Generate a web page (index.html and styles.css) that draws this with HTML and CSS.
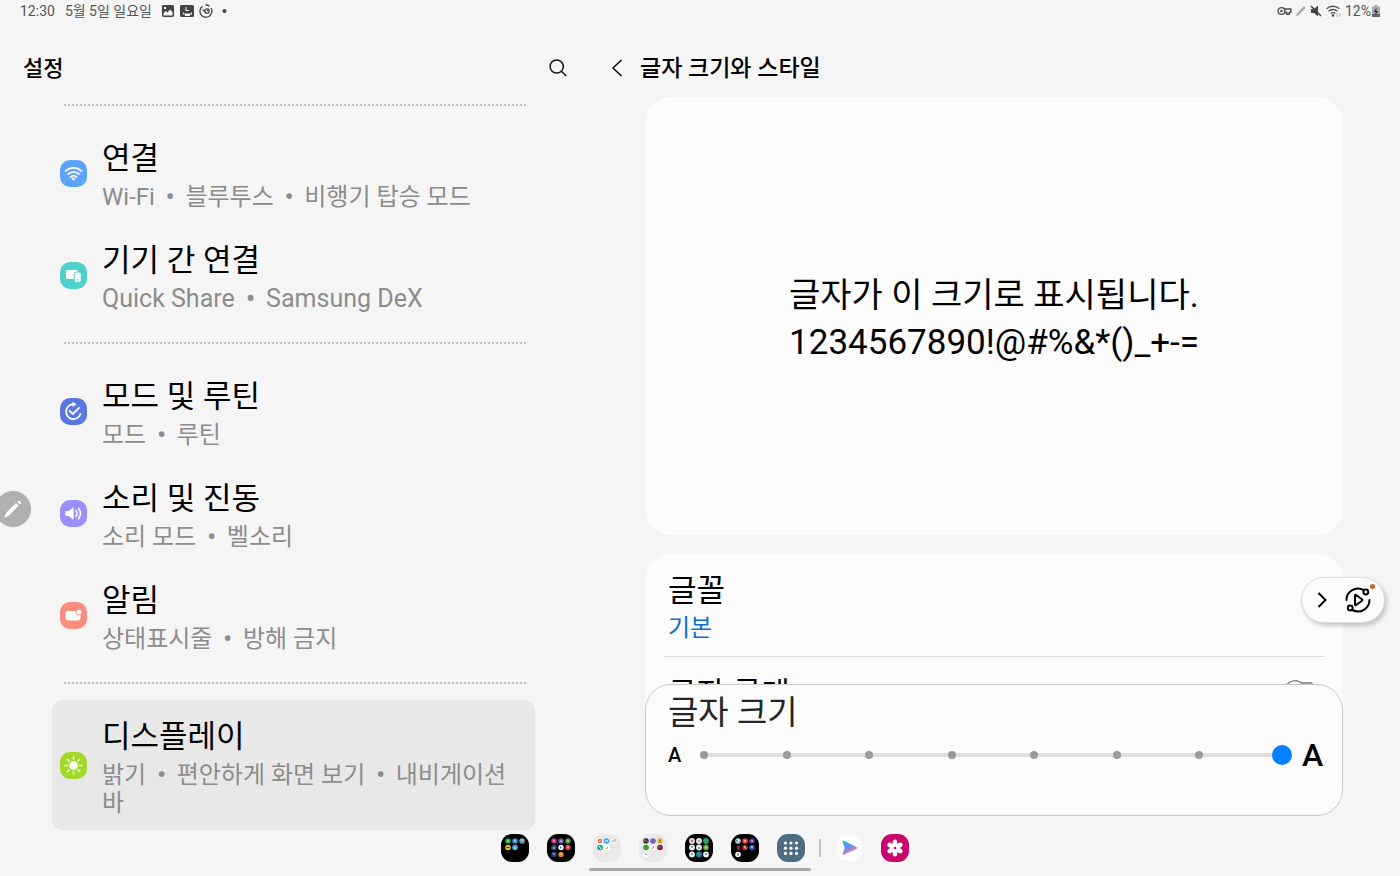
FILE: index.html
```html
<!DOCTYPE html>
<html lang="ko">
<head>
<meta charset="utf-8">
<meta name="viewport" content="width=device-width, initial-scale=1">
<title>설정</title>
<link rel="stylesheet" href="styles.css">
</head>
<body>
<div class="screen">
  <div class="status">
    <time>12:30</time>
    <span class="status-date">5월 5일 일요일</span>
    <svg class="status-notes" width="68" height="14" viewBox="0 0 68 14" aria-hidden="true">
      <path fill="#444" fill-rule="evenodd" d="M2.500 1h9A1.500 1.500 0 0 1 13 2.500v9a1.500 1.500 0 0 1-1.500 1.500h-9A1.500 1.500 0 0 1 1 11.500v-9A1.500 1.500 0 0 1 2.500 1zM2.500 9.500v2h9V8L9 5.500 6.500 8.500 4.500 7zM3 3v2h2V3z"/>
      <path fill="#444" fill-rule="evenodd" d="M20.500 1h11A1.500 1.500 0 0 1 33 2.500v9a1.500 1.500 0 0 1-1.500 1.500h-11a1.500 1.500 0 0 1-1.500-1.500v-9A1.500 1.500 0 0 1 20.500 1zM24.500 3v4h4l-1-1h-2V3zM22 8.500v2h2v1.500h5v-1.500h2v-2h-1v1H23v-1z"/>
      <g fill="none" stroke="#444" stroke-width="1.300"><path d="M41.500 2.300A6 6 0 1 0 50 4M44.500 1A6 6 0 0 1 48.500 2.300"/><circle cx="46" cy="7" r="2.200"/><path d="M41.500 5.500l2 2M46 7l1-1"/></g>
      <circle cx="63.500" cy="7" r="2" fill="#444"/>
    </svg>
    <svg class="status-system" width="66" height="14" viewBox="0 0 66 14" aria-hidden="true">
      <g fill="none" stroke="#4d4d4d" stroke-width="1.400"><circle cx="4.500" cy="7" r="3.400"/><path d="M7.500 5h6.300v3.500h-1.600v1.700H9.800V8.500H7.500"/></g>
      <circle cx="4.500" cy="7" r="1.300" fill="#4d4d4d"/>
      <path d="M19 12.500l1-3 7-7.500 1.800 1.800-7.200 7.200z" fill="#aaa"/>
      <path d="M34 5h3l4-3.500v11L37 9h-3z" fill="#444"/><path d="M34 2l10 10" stroke="#444" stroke-width="1.400"/>
      <g fill="none" stroke="#555" stroke-width="1.300"><path d="M49.500 4.800a9.500 9.500 0 0 1 13 0M51.500 7.300a6.500 6.500 0 0 1 9 0M53.700 9.600a3.500 3.500 0 0 1 4.600 0"/></g>
      <circle cx="56" cy="11.500" r="1.300" fill="#444"/><path d="M60 13V9m3 0v4" stroke="#bbb"/>
    </svg>
    <span>12%</span>
    <svg class="battery" width="8" height="12" viewBox="0 0 8 12" aria-hidden="true"><path d="M2.500 0h3v1.500H8V12H0V1.500h2.500z" fill="#aaa"/><path d="M0 9h8v3H0z" fill="#666"/><path d="M4.500 2.500L2 7h1.700L3.300 10.500 6 6H4.200z" fill="#222"/></svg>
  </div>

  <main class="panes">
    <section class="menu">
      <header class="bar">
        <h1>설정</h1>
        <button class="icon-button" aria-label="검색"><svg width="20" height="20" viewBox="0 0 20 20" fill="none" stroke="#111" stroke-width="1.500"><circle cx="8.700" cy="7.500" r="6.600"/><path d="M13.400 12.300l4.900 4.700"/></svg></button>
      </header>
      <nav class="menu-list">
        <hr class="dots">
        <a class="item" href="#connections">
          <svg class="item-icon" viewBox="0 0 27 27"><rect width="27" height="27" rx="10" fill="#5ca3fb"/><g fill="none" stroke="#fff" stroke-width="1.700" stroke-linecap="round"><path d="M5.500 11.200a11.500 11.500 0 0 1 16 0M8 14.200a8 8 0 0 1 11 0M10.500 17a4.500 4.500 0 0 1 6 0"/></g><circle cx="13.500" cy="19" r="1.400" fill="#fff"/></svg>
          <span class="item-text"><span class="item-title">연결</span><span class="item-sub">Wi-Fi <i>•</i> 블루투스 <i>•</i> 비행기 탑승 모드</span></span>
        </a>
        <a class="item" href="#devices">
          <svg class="item-icon" viewBox="0 0 27 27"><rect width="27" height="27" rx="10" fill="#4fd0ca"/><rect x="6" y="8" width="12" height="9" rx="1.500" fill="#fff"/><rect x="14.200" y="10" width="7" height="10.500" rx="2" fill="#fff" stroke="#4fd0ca"/><path d="M16.500 18h2.400" stroke="#4fd0ca"/></svg>
          <span class="item-text"><span class="item-title">기기 간 연결</span><span class="item-sub latin">Quick Share <i>•</i> Samsung DeX</span></span>
        </a>
        <hr class="dots">
        <a class="item" href="#modes">
          <svg class="item-icon" viewBox="0 0 27 27"><rect width="27" height="27" rx="10" fill="#5977de"/><g fill="none" stroke="#fff" stroke-width="1.800" stroke-linecap="round" stroke-linejoin="round"><path d="M13.500 6.200a7.400 7.400 0 1 0 7 9.800M9.500 12.800l3.300 3.200 6.200-6.200"/></g><path d="M12.500 3.800l4.200 2.700-4.200 2.200z" fill="#fff"/></svg>
          <span class="item-text"><span class="item-title">모드 및 루틴</span><span class="item-sub">모드 <i>•</i> 루틴</span></span>
        </a>
        <a class="item" href="#sound">
          <svg class="item-icon" viewBox="0 0 27 27"><rect width="27" height="27" rx="10" fill="#9a8ffb"/><path d="M6 11h2.800l4.800-4v13l-4.800-4H6q-.8 0-.8-.8v-3.400Q5.200 11 6 11z" fill="#fff"/><path d="M16 10.500q2 3 0 6M18.500 8.300q4 5.200 0 10.400" fill="none" stroke="#fff" stroke-width="1.500" stroke-linecap="round"/></svg>
          <span class="item-text"><span class="item-title">소리 및 진동</span><span class="item-sub">소리 모드 <i>•</i> 벨소리</span></span>
        </a>
        <a class="item" href="#notifications">
          <svg class="item-icon" viewBox="0 0 27 27"><rect width="27" height="27" rx="10" fill="#fa8d80"/><rect x="5.500" y="9" width="15" height="9.500" rx="3" fill="#fff"/><circle cx="19" cy="10" r="3" fill="#fff" stroke="#fa8d80"/></svg>
          <span class="item-text"><span class="item-title">알림</span><span class="item-sub">상태표시줄 <i>•</i> 방해 금지</span></span>
        </a>
        <hr class="dots">
        <a class="item selected" href="#display" aria-current="page">
          <svg class="item-icon" viewBox="0 0 27 27"><rect width="27" height="27" rx="10" fill="#a2d829"/><circle cx="13.500" cy="13.500" r="4.400" fill="#fff"/><path d="M13.500 5v2.200M13.500 19.800V22M5 13.500h2.200M19.800 13.500H22M7.500 7.500L9 9M18 18l1.500 1.500M7.500 19.500L9 18M18 9l1.500-1.500" stroke="#fff" stroke-width="1.500" stroke-linecap="round"/></svg>
          <span class="item-text"><span class="item-title">디스플레이</span><span class="item-sub">밝기 <i>•</i> 편안하게 화면 보기 <i>•</i> 내비게이션 바</span></span>
        </a>
      </nav>
    </section>

    <section class="detail">
      <header class="bar detail-bar">
        <button class="icon-button" aria-label="뒤로"><svg width="12" height="20" viewBox="0 0 12 20" fill="none" stroke="#111" stroke-width="1.600"><path d="M10.500 1L2 9l8.500 8"/></svg></button>
        <h2>글자 크기와 스타일</h2>
      </header>
      <div class="scroll">
        <div class="card preview">
          <div>
            <p>글자가 이 크기로 표시됩니다.</p>
            <p class="digits">1234567890!@#%&amp;*()_+-=</p>
          </div>
        </div>
        <div class="card options">
          <a class="option" href="#font"><span class="item-title">글꼴</span><span class="option-value">기본</span></a>
          <label class="option bold-option"><span class="item-title">글자 굵게</span><input class="toggle" type="checkbox"></label>
        </div>
      </div>
      <div class="sheet">
        <label class="sheet-title" for="size">글자 크기</label>
        <div class="size-row">
          <span class="small-a">A</span>
          <div class="slider">
            <div class="stops"><span></span><span></span><span></span><span></span><span></span><span></span><span></span><span></span></div>
            <input id="size" type="range" min="0" max="7" value="7">
          </div>
          <span class="large-a">A</span>
        </div>
      </div>
    </section>
  </main>

  <button class="pen" aria-label="에어 커맨드"><svg width="20" height="20" viewBox="0 0 20 20"><path d="M1 19l2.500-5.500L13 4l2.500 2.500L6.500 16zM14.200 3L16 1.500l2.500 2.500L16.800 5.500z" fill="#fff"/></svg></button>

  <div class="floating">
    <button class="icon-button" aria-label="펼치기"><svg width="10" height="18" viewBox="0 0 10 18" fill="none" stroke="#000" stroke-width="2"><path d="M1.500 2L8.500 9l-7 7"/></svg></button>
    <button class="icon-button" aria-label="루틴 실행"><svg width="28" height="28" viewBox="0 0 28 28" fill="none" stroke="#000" stroke-width="2" stroke-linecap="round" stroke-linejoin="round"><path d="M2.500 14A11.500 11.500 0 0 1 19.500 4M25.500 14A11.500 11.500 0 0 1 8.500 24"/><circle cx="21.800" cy="6" r="2.400"/><circle cx="6.200" cy="22" r="2.400"/><path d="M11 9.500v9q0 1 1 .5l6-4.300q.8-.7 0-1.400L12 9q-1-.5-1 .5z"/></svg></button>
    <span class="alert-dot"></span>
  </div>

  <footer class="taskbar">
    <div class="apps">
      <button class="app" aria-label="폴더 1"><svg viewBox="0 0 28 28"><rect width="28" height="28" rx="11" fill="#000"/><circle cx="7" cy="7" r="2.800" fill="#18a565"/><circle cx="14" cy="7" r="2.800" fill="#4388d5"/><circle cx="21" cy="7" r="2.800" fill="#6c9bb0"/><circle cx="7" cy="13.500" r="2.800" fill="#dfbd27"/><circle cx="14" cy="13.500" r="2.800" fill="#37b2e8"/><path d="M6 7h2m5 0h2m5-1h2M13 14h2" stroke="#d8eceb"/><path d="M5.500 13.500h3" stroke="#333"/></svg></button>
      <button class="app" aria-label="폴더 2"><svg viewBox="0 0 28 28"><rect width="28" height="28" rx="11" fill="#000"/><circle cx="7" cy="7" r="2.700" fill="#d02e86"/><circle cx="14" cy="7" r="2.700" fill="#7954ad"/><circle cx="21" cy="7" r="2.700" fill="#5a9c39"/><circle cx="7" cy="13.500" r="2.700" fill="#344973"/><circle cx="14" cy="13.500" r="2.700" fill="#f3f3f3"/><circle cx="21" cy="13.500" r="2.700" fill="#e13e3a"/><circle cx="7" cy="20.500" r="2.700" fill="#263d88"/><circle cx="14" cy="20.500" r="2.700" fill="#e27a2b"/><path d="M6 7h2m5 0h2m5 0h2M6 14h2m12-1h2M13 20h2M6 20h2" stroke="#e8dbe9"/><path d="M13 12l2 1.500-2 1.500z" fill="#3978c8"/></svg></button>
      <button class="app" aria-label="폴더 3"><svg viewBox="0 0 28 28"><rect width="28" height="28" rx="11" fill="#e9e9e9"/><circle cx="7" cy="7" r="2.800" fill="#fff"/><circle cx="7" cy="7" r="1.500" fill="none" stroke="#d36d35" stroke-width="1.500"/><circle cx="13.500" cy="7" r="2.800" fill="#3da5e5"/><path d="M12 7h3" stroke="#fff"/><circle cx="21" cy="7" r="2.800" fill="#f7f7f7"/><path d="M19 8l3-3v3" fill="none" stroke="#8caaaa"/><circle cx="7" cy="13.500" r="2.800" fill="#17a88e"/><path d="M6 12l2 3" stroke="#fff"/><circle cx="14" cy="14" r="2.800" fill="#fff"/><path d="M13 15l2-2" stroke="#e3ac45" stroke-width="1.500"/></svg></button>
      <button class="app" aria-label="폴더 4"><svg viewBox="0 0 28 28"><rect width="28" height="28" rx="11" fill="#e9e9e9"/><circle cx="7" cy="7" r="2.800" fill="#383838"/><circle cx="14" cy="7" r="2.800" fill="#7157dc"/><circle cx="21" cy="7" r="2.800" fill="#edbd20"/><circle cx="7" cy="13.500" r="2.800" fill="#25a62b"/><circle cx="14" cy="13.500" r="2.800" fill="#fff"/><circle cx="21" cy="13.500" r="2.800" fill="#86174d"/><circle cx="7" cy="20.500" r="2.800" fill="#fff"/><path d="M5 6l4 2m3-1h4m4-1h2m-1 0v3M6 14h3m4 1l2-3m4 1h3M6 19l2 2" stroke="#9a7b63"/></svg></button>
      <button class="app" aria-label="폴더 5"><svg viewBox="0 0 28 28"><rect width="28" height="28" rx="11" fill="#000"/><g fill="#eee"><circle cx="7" cy="7" r="2.900"/><circle cx="14" cy="7" r="2.900"/><circle cx="7" cy="13.500" r="2.900"/><circle cx="14" cy="13.500" r="2.900"/><circle cx="7" cy="20.500" r="2.900"/><circle cx="21" cy="20.500" r="2.900"/></g><circle cx="21" cy="7" r="2.900" fill="#24aa5c"/><circle cx="21" cy="13.500" r="2.900" fill="#4d9a48"/><circle cx="14" cy="20.500" r="2.900" fill="#148a9c"/><circle cx="7" cy="7" r="1.400" fill="#d3783a"/><path d="M13 7h2M6 13h2m5 1h2m5-1h2M6 20h2m5 0h2m5 0h2M20 7h2" stroke="#4687a0" stroke-width="1.500"/><circle cx="21" cy="13.500" r="1.200" fill="#f6d44a"/></svg></button>
      <button class="app" aria-label="폴더 6"><svg viewBox="0 0 28 28"><rect width="28" height="28" rx="11" fill="#000"/><circle cx="7" cy="7" r="2.800" fill="#b7d1dc"/><circle cx="14" cy="7" r="2.800" fill="#e9423e"/><circle cx="21" cy="7" r="2.800" fill="#5d369c"/><path d="M6 12l2 1-1 3" stroke="#b72527" stroke-width="2" fill="none"/><circle cx="14" cy="13.500" r="2.800" fill="#bd2222"/><circle cx="21" cy="13.500" r="2.800" fill="#2c5dc5"/><circle cx="7" cy="20.500" r="2.800" fill="#fff"/><path d="M6 7h2m5 0h2m5 0h2m-9 5l2 3m5-2h2M6 20h2" stroke="#fff"/><path d="M6 6v2M7 19v3" stroke="#365870"/></svg></button>
      <button class="app" aria-label="모든 앱"><svg viewBox="0 0 28 28"><rect width="28" height="28" rx="11" fill="#4e6d80"/><g fill="#fff"><circle cx="8.500" cy="9" r="1.600"/><circle cx="14" cy="9" r="1.600"/><circle cx="19.500" cy="9" r="1.600"/><circle cx="8.500" cy="14.200" r="1.600"/><circle cx="14" cy="14.200" r="1.600"/><circle cx="19.500" cy="14.200" r="1.600"/><circle cx="8.500" cy="19.400" r="1.600"/><circle cx="14" cy="19.400" r="1.600"/><circle cx="19.500" cy="19.400" r="1.600"/></g></svg></button>
      <span class="apps-divider"></span>
      <button class="app" aria-label="원스토어"><svg viewBox="0 0 28 28"><defs><linearGradient id="arrow" x1="0" y1="0" x2=".5" y2="1"><stop stop-color="#35b8f5"/><stop offset=".5" stop-color="#648cec"/><stop offset="1" stop-color="#ff7898"/></linearGradient></defs><rect x=".5" y=".5" width="27" height="27" rx="11" fill="#fff" stroke="#ececec" stroke-width=".5"/><path d="M7.500 7.500q0-1.500 1.500-.7l12.500 6.200q1.500 1 0 2L9 20.500q-2 .6-1.300-1.200l2-5z" fill="url(#arrow)"/></svg></button>
      <button class="app" aria-label="갤러리"><svg viewBox="0 0 28 28"><rect width="28" height="28" rx="11" fill="#c9066c"/><g fill="#fff"><ellipse cx="14" cy="9" rx="2.400" ry="3.500"/><ellipse cx="14" cy="9" rx="2.400" ry="3.500" transform="rotate(60 14 14)"/><ellipse cx="14" cy="9" rx="2.400" ry="3.500" transform="rotate(120 14 14)"/><ellipse cx="14" cy="9" rx="2.400" ry="3.500" transform="rotate(180 14 14)"/><ellipse cx="14" cy="9" rx="2.400" ry="3.500" transform="rotate(240 14 14)"/><ellipse cx="14" cy="9" rx="2.400" ry="3.500" transform="rotate(300 14 14)"/><circle cx="14" cy="14" r="2.500"/></g><circle cx="14" cy="14" r="1.300" fill="#c9066c"/></svg></button>
    </div>
    <div class="home-handle"></div>
  </footer>
</div>
</body>
</html>
```
FILE: styles.css
```css
* { box-sizing: border-box; }

body {
  margin: 0;
  background: #f5f5f5;
  color: #000;
  font-family: Roboto, "Noto Sans CJK KR", sans-serif;
  word-break: keep-all;
}

h1, h2, p { margin: 0; }
a { color: inherit; text-decoration: none; }
svg { display: block; flex: none; }

button {
  margin: 0;
  padding: 0;
  border: 0;
  background: none;
  cursor: pointer;
}

.screen {
  position: relative;
  display: flex;
  flex-direction: column;
  height: 100vh;
  overflow: hidden;
}

.status {
  display: flex;
  align-items: center;
  height: 24px;
  padding: 0 20px 2px;
  color: #555;
  font-size: 14px;
  line-height: 22px;
}
.status-date { margin-left: 10px; }
.status-notes { margin-left: 9px; }
.status-system { margin: 0 2px 0 auto; }
.battery { margin-left: 1px; }

.panes {
  display: grid;
  grid-template-columns: 42fr 58fr;
  flex: 1;
  min-height: 0;
}

.bar {
  display: flex;
  align-items: center;
  justify-content: space-between;
  padding: 26px 20px 0 23px;
}
.bar h1, .bar h2 {
  font-size: 23px;
  font-weight: 500;
  line-height: 38px;
}
.bar h1 { font-size: 22px; }
.icon-button {
  display: grid;
  place-items: center;
}

.menu-list { padding: 0 53px 0 52px; }

.dots {
  height: 2px;
  margin: 16px 9px 16px 12px;
  border: 0;
  border-top: 2px dotted #bbb;
}

.item {
  display: flex;
  align-items: center;
  gap: 15px;
  padding: 17px 12px 13px 8px;
  border-radius: 10px;
}
.item.selected { background: #e8e8e8; }
.item-icon {
  width: 27px;
  height: 27px;
  margin-bottom: 4px;
}
.item-text {
  display: flex;
  flex-direction: column;
  gap: 4px;
}
.item-title {
  font-size: 31px;
  line-height: 40px;
}
.item-sub {
  color: #8c8c8c;
  font-size: 24px;
  line-height: 28px;
}
.item-sub.latin { font-size: 25px; }
.item-sub i {
  margin: 0 5px;
  font-style: normal;
  font-weight: 700;
}

.detail {
  display: flex;
  flex-direction: column;
  min-width: 0;
  min-height: 0;
  padding-bottom: 60px;
}
.detail-bar {
  justify-content: flex-start;
  gap: 17px;
}
.scroll {
  display: flex;
  flex: 1;
  flex-direction: column;
  gap: 19px;
  min-height: 0;
  margin-top: 9px;
  padding: 0 57px;
  overflow: hidden;
}
.card {
  flex: none;
  border-radius: 26px;
  background: #fcfcfc;
}
.preview {
  display: grid;
  place-items: center;
  min-height: 438px;
  padding-top: 5px;
  font-size: 34px;
  line-height: 48px;
}
.digits { font-size: 35px; }
.options { padding: 0 18px; }
.option {
  display: flex;
  flex-direction: column;
  gap: 3px;
  padding: 17px 5px 14px;
}
.option + .option { border-top: 1px solid #dedede; }
.option-value {
  color: #0a72cc;
  font-size: 24px;
  line-height: 28px;
}
.bold-option {
  flex-direction: row;
  align-items: center;
  justify-content: space-between;
}
.toggle {
  width: 32px;
  height: 22px;
  margin: 0 4px 6px;
  appearance: none;
  border-radius: 11px;
  background:
    radial-gradient(circle at 11px 11px, #fcfcfc 9px, #8c8c8c 10px, #8c8c8c 11px, transparent 11px),
    linear-gradient(#999, #999) 11px 2px / 20px 18px no-repeat;
}

.sheet {
  position: relative;
  margin: -30px 57px 0;
  padding: 4px 18px 42px 22px;
  border: 1px solid #cbcbcb;
  border-radius: 26px;
  background: #fcfcfc;
}
.sheet-title {
  display: block;
  color: #252525;
  font-size: 33px;
  line-height: 48px;
}
.size-row {
  display: flex;
  align-items: center;
  gap: 10px;
  height: 36px;
}
.small-a, .large-a { font-weight: 500; }
.small-a { width: 16px; font-size: 20px; }
.large-a { width: 22px; font-size: 32px; }
.slider {
  display: grid;
  flex: 1;
  align-items: center;
}
.slider > * { grid-area: 1 / 1; }
.stops {
  display: flex;
  align-items: center;
  justify-content: space-between;
  padding: 0 6px;
  background: linear-gradient(#dedede, #dedede) center / calc(100% - 20px) 4px no-repeat;
}
.stops span {
  width: 8px;
  height: 8px;
  border-radius: 50%;
  background: #999;
}
.slider input {
  width: 100%;
  height: 20px;
  margin: 0;
  appearance: none;
  background: none;
}
.slider input::-webkit-slider-thumb {
  width: 20px;
  height: 20px;
  appearance: none;
  border-radius: 50%;
  background: #037fff;
}

.pen {
  position: absolute;
  top: 491px;
  left: -5px;
  display: grid;
  place-items: center;
  width: 36px;
  height: 36px;
  border-radius: 50%;
  background: #b0b0b0;
}

.floating {
  position: absolute;
  top: 577px;
  right: 15px;
  display: flex;
  align-items: center;
  gap: 17px;
  padding: 8px 12px 8px 15px;
  border: 1px solid #dcdcdc;
  border-radius: 23px;
  background: #fcfcfc;
  box-shadow: 2px 3px 4px #0003;
}
.alert-dot {
  position: absolute;
  top: 6px;
  right: 9px;
  width: 5px;
  height: 5px;
  border-radius: 50%;
  background: #d9622b;
}

.taskbar {
  position: absolute;
  right: 0;
  bottom: 0;
  left: 0;
  display: flex;
  flex-direction: column;
  align-items: center;
  gap: 6px;
  padding-bottom: 5px;
}
.apps {
  display: flex;
  align-items: center;
  gap: 18px;
  padding-left: 10px;
}
.app, .app svg { width: 28px; height: 28px; }
.apps-divider {
  width: 2px;
  height: 18px;
  margin: 0 -4px;
  background: #c4c4c4;
}
.home-handle {
  width: 222px;
  height: 3px;
  border-radius: 2px;
  background: #a8a8a8;
}
```
